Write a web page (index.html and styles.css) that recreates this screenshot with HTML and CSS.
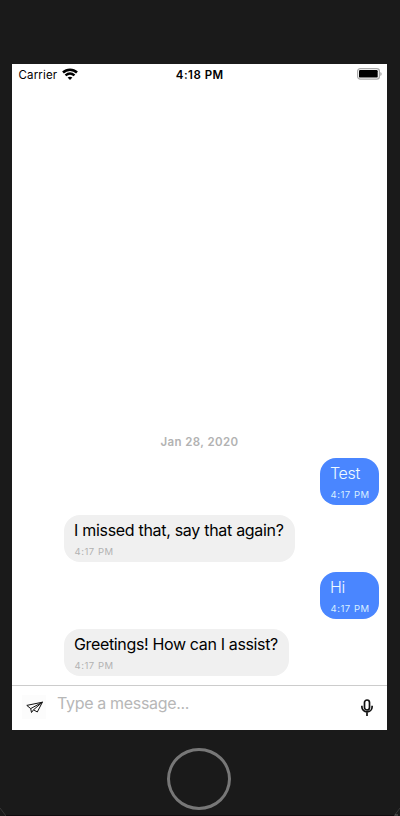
FILE: index.html
```html
<!DOCTYPE html>
<html lang="en">
<head>
<meta charset="utf-8">
<title>Chat</title>
<link rel="stylesheet" href="styles.css">
</head>
<body>
<div class="phone">
  <main class="screen">
    <header class="status">
      <div class="carrier"><span>Carrier</span>
        <svg class="wifi" width="16" height="12" viewBox="0 0 16 12" fill="none" stroke="#000" stroke-width="2.5"><path d="M1 4.5C5 .7 11 .7 15 4.5M3.5 7.4C6.2 5.1 9.8 5.1 12.5 7.4"/><path d="M8 12 5.6 9.6Q8 7.7 10.4 9.6Z" fill="#000" stroke="none"/></svg>
      </div>
      <div class="clock">4:18 PM</div>
      <svg class="battery" width="25" height="12" viewBox="0 0 25 12"><rect x=".6" y=".6" width="21.8" height="10.6" rx="2.6" fill="#fff" stroke="#aaa" stroke-width="1.2"/><rect x="2" y="2" width="18.7" height="7.6" rx="1.2" fill="#000"/><path d="M23.2 4Q24.8 4.6 24.8 6T23.2 8Z" fill="#b5b5b5"/></svg>
    </header>
    <section class="chat">
      <div class="date">Jan 28, 2020</div>
      <div class="bubble sent"><p class="text">Test</p><time>4:17 PM</time></div>
      <div class="bubble received"><p class="text">I missed that, say that again?</p><time>4:17 PM</time></div>
      <div class="bubble sent"><p class="text">Hi</p><time>4:17 PM</time></div>
      <div class="bubble received short"><p class="text greeting">Greetings! How can I assist?</p><time>4:17 PM</time></div>
    </section>
    <footer class="composer">
      <div class="send"><svg width="24" height="24" viewBox="0 0 24 24" fill="none" stroke="#111" stroke-width="1" stroke-linejoin="round"><path d="M4.8 10.4 20.4 7.2 15.3 17 11.5 14.8 9.5 17.5 8.7 13.6ZM8.7 13.6 20.4 7.2 11.5 14.8"/></svg></div>
      <div class="placeholder">Type a message...</div>
      <svg class="mic" width="12" height="18" viewBox="0 0 12 18" fill="none" stroke="#111" stroke-width="1.7"><rect x="3.5" y="1" width="5" height="10" rx="2.5"/><path d="M.9 6.8V8A5.1 4.8 0 0 0 11.1 8V6.8M6 12.8V17"/></svg>
    </footer>
  </main>
  <div class="home"></div>
  <svg class="edge" width="400" height="16" viewBox="0 0 400 16" fill="none" stroke="#444" stroke-width=".7"><path d="M0 8 6 16M400 8 394 16"/><path d="M6 15.5H394" stroke="#100b0e" stroke-width="1"/><path d="M395 15H398" stroke="#888"/></svg>
</div>
</body>
</html>
```
FILE: styles.css
```css
* { box-sizing: border-box; }
body { margin: 0; background: #1a1a1a; font-family: Inter, sans-serif; }
p { margin: 0; }
svg { display: block; flex: none; }
.phone { position: relative; width: 400px; height: 816px; padding: 64px 13px 0 12px; overflow: hidden; background: #1a1a1a; }
.screen { display: flex; flex-direction: column; height: 666px; background: #fff; }
.status { display: grid; grid-template-columns: 1fr auto 1fr; align-items: start; height: 20px; padding: 0 5px 0 6.5px; }
.carrier { display: flex; gap: 4.5px; font-size: 11.5px; line-height: 22px; letter-spacing: .15px; }
.wifi { margin-top: 4px; }
.clock { margin-left: -1px; font-size: 11.5px; font-weight: 600; line-height: 22px; letter-spacing: .5px; }
.battery { justify-self: end; margin-top: 4px; }
.chat { display: flex; flex: 1; flex-direction: column; justify-content: flex-end; gap: 10px; padding-bottom: 9px; }
.date { align-self: center; height: 13px; color: #b2b2b2; font-size: 11.5px; font-weight: 600; line-height: 14px; letter-spacing: .4px; }
.bubble { height: 47px; padding: 4px 10px 0; border-radius: 16px; white-space: nowrap; }
.sent { align-self: flex-end; width: 59px; margin-right: 8px; background: #4a86ff; color: #eefaff; }
.received { width: 230.5px; margin-left: 52px; background: #f0f0f0; color: #000; }
.short { width: 224.5px; }
.text { height: 22px; font-size: 16px; line-height: 22px; letter-spacing: -.3px; }
.sent .text { font-weight: 350; }
.greeting { letter-spacing: -.35px; }
.bubble time { display: block; margin: 5px 0 0 .5px; color: #b2b2b2; font-size: 9.5px; line-height: 12px; letter-spacing: .52px; }
.sent time { color: #d9f0ff; }
.composer { display: flex; height: 45px; padding: 0 14px 0 10px; border-top: 1px solid #ccc; }
.send { width: 24px; height: 24px; margin-top: 9px; background: #fcfcfc; }
.placeholder { flex: 1; margin-left: 11px; color: #b7b7b7; font-size: 16px; line-height: 35px; letter-spacing: -.33px; }
.mic { margin-top: 13px; }
.home { width: 64px; height: 62px; margin: 18px auto 0 155.4px; border: 3px solid #777; border-radius: 50%; }
.edge { position: absolute; bottom: 0; left: 0; }
```
